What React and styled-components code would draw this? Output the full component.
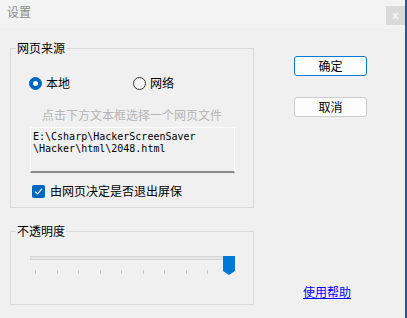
import React from "react";
import styled, { createGlobalStyle } from "styled-components";

const FONT = `"Noto Sans CJK SC", "Noto Sans", sans-serif`;

const GlobalStyle = createGlobalStyle`
  html, body {
    margin: 0;
    padding: 0;
    background: #f0f0f0;
  }
  * {
    box-sizing: border-box;
  }
`;

const TICKS = 10;

const App = () => {
  const opacity = 100;

  return (
    <Window>
      <GlobalStyle />
      <TitleBar>
        <Title>设置</Title>
        <CloseButton>x</CloseButton>
      </TitleBar>

      <Body>
        <LeftColumn>
          <GroupBox>
            <Legend>网页来源</Legend>
            <SourceContent>
              <RadioRow>
                <RadioLabel style={{ width: 104 }}>
                  <RadioMark $checked />
                  本地
                </RadioLabel>
                <RadioLabel>
                  <RadioMark />
                  网络
                </RadioLabel>
              </RadioRow>

              <Hint>点击下方文本框选择一个网页文件</Hint>

              <PathBox>
                <div>E:\Csharp\HackerScreenSaver</div>
                <div>\Hacker\html\2048.html</div>
              </PathBox>

              <CheckRow>
                <CheckMark>
                  <svg width="9" height="9" viewBox="0 0 9 9">
                    <path
                      d="M1.2 4.6 L3.5 6.9 L7.9 1.9"
                      fill="none"
                      stroke="#fff"
                      strokeWidth="1.3"
                    />
                  </svg>
                </CheckMark>
                由网页决定是否退出屏保
              </CheckRow>
            </SourceContent>
          </GroupBox>

          <OpacityGroup>
            <Legend>不透明度</Legend>
            <SliderArea>
              <Track />
              <Thumb style={{ left: (opacity / 100) * 193 }}>
                <svg width="12" height="19" viewBox="0 0 12 19">
                  <path d="M0 0 H12 V15 L6 19 L0 15 Z" fill="#0078d7" />
                </svg>
              </Thumb>
              <Ticks>
                {Array.from({ length: TICKS }).map((_, i) => (
                  <Tick key={i} />
                ))}
              </Ticks>
            </SliderArea>
          </OpacityGroup>
        </LeftColumn>

        <RightColumn>
          <Button $primary>确定</Button>
          <Button>取消</Button>
          <HelpLink href="#">使用帮助</HelpLink>
        </RightColumn>
      </Body>
    </Window>
  );
};

const Window = styled.div`
  width: 407px;
  height: 318px;
  display: flex;
  flex-direction: column;
  border-right: 2px solid #2d4ea6;
  background: #f0f0f0;
  font-family: ${FONT};
  font-size: 12px;
  color: #000;
  overflow: hidden;
`;

const TitleBar = styled.div`
  height: 28px;
  flex-shrink: 0;
  display: flex;
  align-items: flex-start;
  padding-left: 7px;
  background: #f3f3f3;
`;

const Title = styled.span`
  margin-top: 4px;
  line-height: 16px;
  color: #8a8a8a;
`;

const CloseButton = styled.div`
  margin-left: auto;
  margin-top: 6px;
  width: 19px;
  height: 19px;
  display: flex;
  align-items: center;
  justify-content: center;
  background: #dadada;
  color: #f4f4f4;
  font-family: "DejaVu Sans", sans-serif;
  font-size: 10px;
  font-weight: bold;
`;

const Body = styled.div`
  flex: 1;
  display: flex;
`;

const LeftColumn = styled.div`
  width: 254px;
  padding-left: 10px;
  padding-top: 12px;
`;

const GroupBox = styled.fieldset`
  margin: 0;
  padding: 0 0 6px;
  border: 1px solid #d9d9d9;
  min-width: 0;
`;

const OpacityGroup = styled(GroupBox)`
  margin-top: 15px;
  padding: 0;
  height: 82px;
`;

const Legend = styled.legend`
  margin-left: 5px;
  padding: 0 1px;
  line-height: 16px;
`;

const SourceContent = styled.div`
  display: flex;
  flex-direction: column;
  padding-top: 17px;
`;

const RadioRow = styled.div`
  display: flex;
  align-items: center;
  height: 20px;
  padding-left: 18px;
`;

const RadioLabel = styled.label`
  display: flex;
  align-items: center;
  gap: 4px;
  line-height: 16px;
`;

const RadioMark = styled.span`
  width: 13px;
  height: 13px;
  border-radius: 50%;
  flex-shrink: 0;
  background: ${(p) => (p.$checked ? "#0067c0" : "#f4f4f4")};
  border: 1px solid ${(p) => (p.$checked ? "#0067c0" : "#333")};
  display: flex;
  align-items: center;
  justify-content: center;

  &::after {
    content: "";
    display: ${(p) => (p.$checked ? "block" : "none")};
    width: 5px;
    height: 5px;
    border-radius: 50%;
    background: #fff;
  }
`;

const Hint = styled.div`
  margin-top: 14px;
  padding-left: 31px;
  line-height: 16px;
  color: #b4b4b4;
`;

const PathBox = styled.div`
  margin: 4px 0 0 19px;
  width: 205px;
  height: 46px;
  padding: 3px 2px;
  border: 1px solid #fbfbfb;
  border-bottom: 2px solid #8a8a8a;
  background: #f0f0f0;
  font-family: "DejaVu Sans Mono", "Liberation Mono", monospace;
  font-size: 10px;
  line-height: 11.5px;
  color: #000;
`;

const CheckRow = styled.label`
  margin-top: 8px;
  height: 20px;
  display: flex;
  align-items: center;
  gap: 5px;
  padding-left: 21px;
  line-height: 16px;
`;

const CheckMark = styled.span`
  width: 13px;
  height: 13px;
  border-radius: 2px;
  background: #0067c0;
  display: flex;
  align-items: center;
  justify-content: center;
`;

const SliderArea = styled.div`
  position: relative;
  margin: 17px 0 0 19px;
  width: 205px;
  height: 25px;
`;

const Track = styled.div`
  margin-top: 6px;
  height: 4px;
  background: #e7e7e7;
  border: 1px solid #d6d6d6;
`;

const Thumb = styled.div`
  position: absolute;
  top: 0;
  width: 12px;
  height: 19px;
  line-height: 0;
`;

const Ticks = styled.div`
  display: flex;
  justify-content: space-between;
  margin-top: 10px;
  padding: 0 5px 0 5px;
`;

const Tick = styled.span`
  width: 1px;
  height: 4px;
  background: #c6c6c6;
`;

const RightColumn = styled.div`
  display: flex;
  flex-direction: column;
  align-items: flex-start;
  padding: 28px 0 18px 40px;
`;

const Button = styled.button`
  width: 73px;
  height: 20px;
  margin-bottom: 21px;
  padding: 0;
  background: #fdfdfd;
  border: 1px solid ${(p) => (p.$primary ? "#0078d7" : "#cccccc")};
  border-radius: 3px;
  font-family: ${FONT};
  font-size: 12px;
  line-height: 16px;
  color: #000;
`;

const HelpLink = styled.a`
  margin-top: auto;
  margin-left: 9px;
  line-height: 16px;
  color: #0000ff;
  text-decoration: underline;
`;

export default App;
